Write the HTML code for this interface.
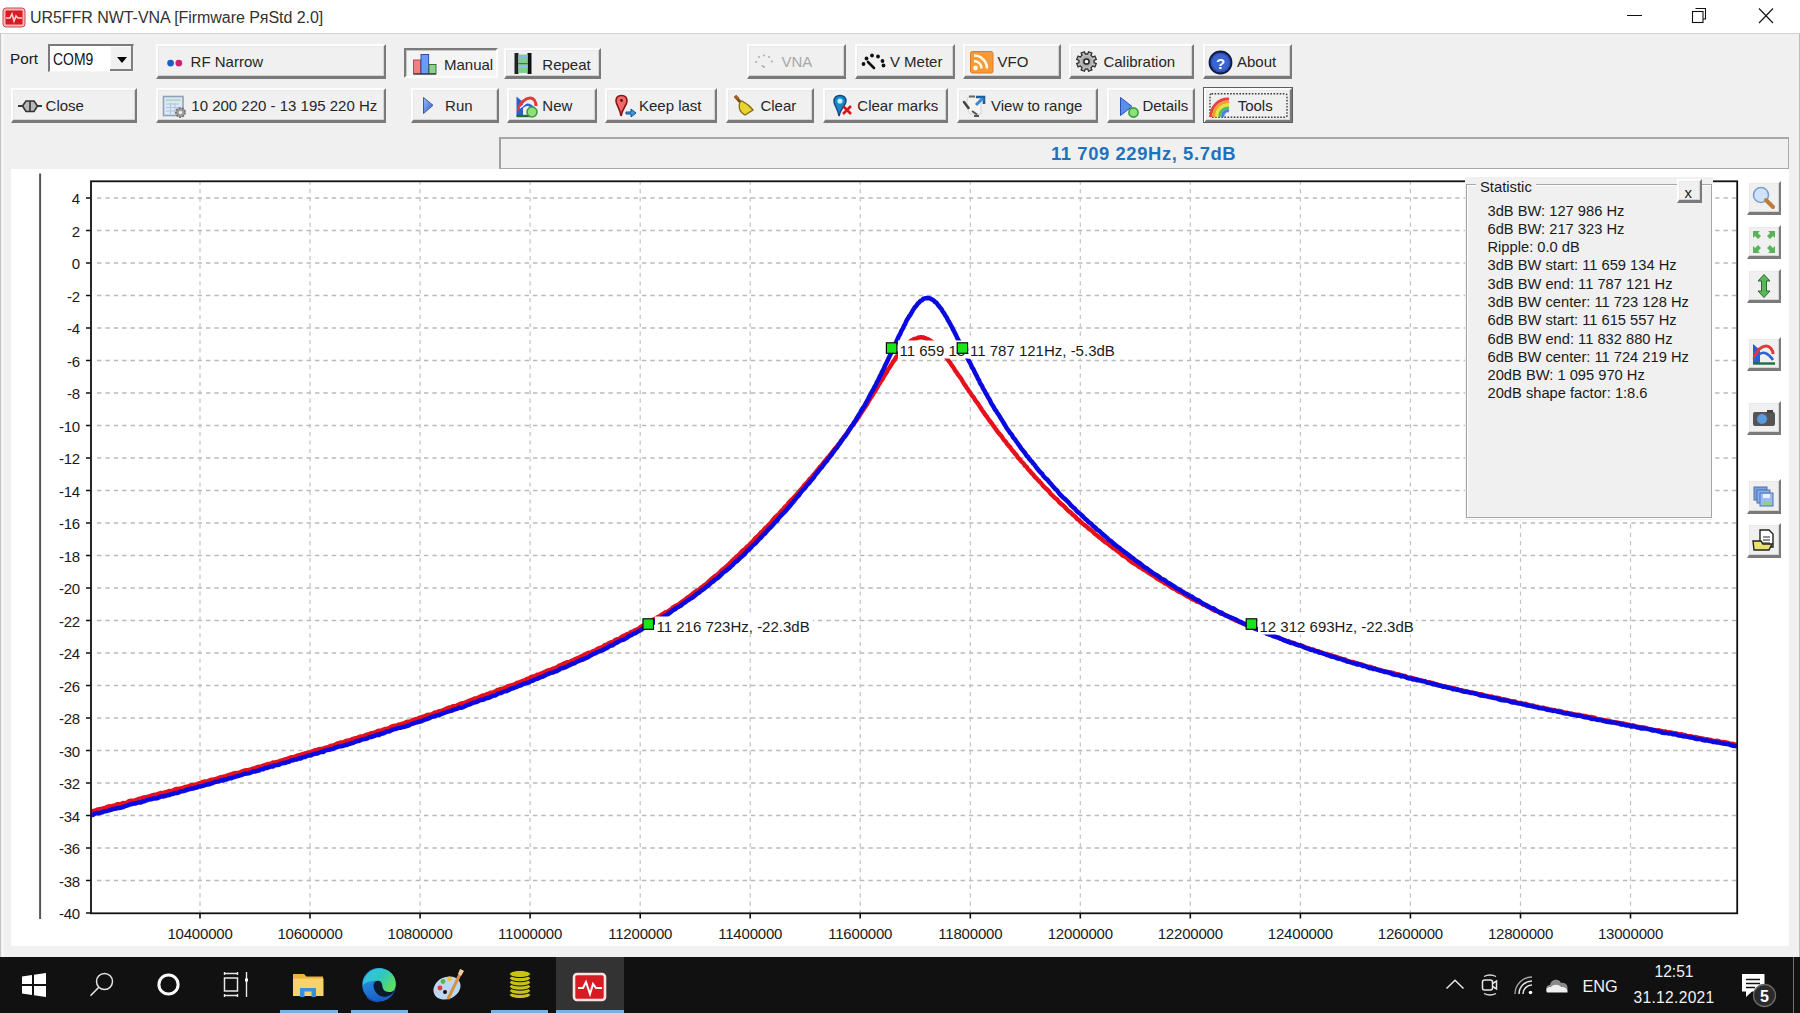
<!DOCTYPE html><html><head><meta charset="utf-8"><style>
*{margin:0;padding:0;box-sizing:border-box}
html,body{width:1800px;height:1013px;overflow:hidden;background:#f0f0f0;font-family:"Liberation Sans",sans-serif;color:#1e1e1e}
.a{position:absolute}
.t{position:absolute;white-space:nowrap;line-height:1}
.btn{position:absolute;background:#f0f0f0;border-top:2px solid #fdfdfd;border-left:2px solid #fdfdfd;border-right:2px solid #7a7a7a;border-bottom:3px solid #7a7a7a;box-shadow:inset -1px -1px 0 #d4d4d4, inset 1px 1px 0 #e9e9e9}
.btn.pr{border-top:2px solid #7a7a7a;border-left:2px solid #7a7a7a;border-right:2px solid #fdfdfd;border-bottom:2px solid #fdfdfd;box-shadow:inset 1px 1px 0 #c8c8c8;background:#f4f4f4}
.bt{position:absolute;white-space:nowrap;line-height:1;font-size:15px;color:#1a1a1a}
svg.ic{position:absolute;overflow:visible}
</style></head><body><div class="a" style="left:0;top:0;width:1800px;height:34px;background:#fff;border-bottom:1px solid #d2d2d2"></div>
<div class="a" style="left:0;top:34px;width:1px;height:923px;background:#c4c4c4"></div><div class="a" style="left:2px;top:34px;width:2px;height:923px;background:#f7f7f7"></div>
<div class="a" style="left:1799px;top:34px;width:1px;height:923px;background:#bdbdbd"></div>
<svg class="ic" style="left:2px;top:7px" width="24" height="21" viewBox="0 0 24 21"><rect x="1" y="1" width="22" height="19" rx="3" fill="#f4b7b7" stroke="#c94a4a" stroke-width="1"/><rect x="3.5" y="3.5" width="17" height="14" rx="1" fill="#d81b22"/><polyline points="4,11 8,11 10,7 12,14 14,9 16,11 20,11" fill="none" stroke="#ffd0d0" stroke-width="1.6"/></svg>
<div class="t" style="left:30px;top:10px;font-size:16px;color:#333;letter-spacing:-0.05px">UR5FFR NWT-VNA [Firmware PяStd 2.0]</div>
<div class="a" style="left:1627px;top:15px;width:15px;height:1px;background:#111"></div>
<svg class="ic" style="left:1690px;top:6px" width="20" height="20" viewBox="0 0 20 20"><path d="M5.5 2.5 H15.5 V13 H13" fill="none" stroke="#111" stroke-width="1.1"/><rect x="2.5" y="5.5" width="10.5" height="11" fill="none" stroke="#111" stroke-width="1.1"/></svg>
<svg class="ic" style="left:1756px;top:6px" width="20" height="20" viewBox="0 0 20 20"><path d="M3 2.5 L17 17 M17 2.5 L3 17" fill="none" stroke="#111" stroke-width="1.1"/></svg>
<div class="t" style="left:10px;top:51px;font-size:15.3px;color:#1a1a1a">Port</div>
<div class="a" style="left:48px;top:44px;width:86px;height:28px;background:#fff;border-top:2.2px solid #7a7a7a;border-left:2.2px solid #7a7a7a;border-right:1px solid #f4f4f4;border-bottom:1px solid #f4f4f4"></div>
<div class="a" style="left:110px;top:46px;width:23px;height:25px;background:#f0f0f0;border-right:2px solid #7f7f7f;border-bottom:2px solid #7f7f7f;box-shadow:inset 1px 1px 0 #fafafa"></div>
<svg class="ic" style="left:115.5px;top:56px" width="12" height="8" viewBox="0 0 12 8"><path d="M1 1 H11 L6 7 Z" fill="#000"/></svg>
<div class="t" style="left:53px;top:51.5px;font-size:16px;color:#111;transform:scaleX(0.87);transform-origin:0 0">COM9</div>
<div class="btn " style="left:156px;top:44px;width:230px;height:35px"></div>
<div class="bt" style="left:190.6px;top:54.1px;color:#262626;font-size:15.0px">RF Narrow</div>
<div class="btn pr" style="left:404px;top:48px;width:94px;height:30px"></div>
<div class="bt" style="left:444.0px;top:57.1px;color:#262626;font-size:15.0px">Manual</div>
<div class="btn " style="left:504px;top:48px;width:97px;height:31px"></div>
<div class="bt" style="left:542.3px;top:57.1px;color:#262626;font-size:15.0px">Repeat</div>
<div class="btn " style="left:747px;top:44px;width:99px;height:35px"></div>
<div class="bt" style="left:781.4px;top:54.1px;color:#a8a8a8;font-size:15.0px">VNA</div>
<div class="btn " style="left:855px;top:44px;width:100px;height:35px"></div>
<div class="bt" style="left:889.9px;top:54.1px;color:#262626;font-size:15.0px">V Meter</div>
<div class="btn " style="left:963px;top:44px;width:98px;height:35px"></div>
<div class="bt" style="left:997.5px;top:54.1px;color:#262626;font-size:15.0px">VFO</div>
<div class="btn " style="left:1069px;top:44px;width:125px;height:35px"></div>
<div class="bt" style="left:1103.4px;top:54.1px;color:#262626;font-size:15.0px">Calibration</div>
<div class="btn " style="left:1203px;top:44px;width:89px;height:35px"></div>
<div class="bt" style="left:1237.0px;top:54.1px;color:#262626;font-size:15.0px">About</div>
<div class="btn " style="left:11px;top:88px;width:126px;height:35px"></div>
<div class="bt" style="left:45.6px;top:97.8px;color:#262626;font-size:15.0px">Close</div>
<div class="btn " style="left:156px;top:88px;width:230px;height:35px"></div>
<div class="bt" style="left:191.3px;top:97.5px;color:#262626;font-size:15.0px">10 200 220 - 13 195 220 Hz</div>
<div class="btn " style="left:411px;top:88px;width:88px;height:35px"></div>
<div class="bt" style="left:445.1px;top:97.8px;color:#262626;font-size:15.0px">Run</div>
<div class="btn " style="left:507px;top:88px;width:90px;height:35px"></div>
<div class="bt" style="left:542.3px;top:97.8px;color:#262626;font-size:15.0px">New</div>
<div class="btn " style="left:605px;top:88px;width:112px;height:35px"></div>
<div class="bt" style="left:639.0px;top:97.5px;color:#262626;font-size:15.0px">Keep last</div>
<div class="btn " style="left:726px;top:88px;width:88px;height:35px"></div>
<div class="bt" style="left:760.4px;top:97.5px;color:#262626;font-size:15.0px">Clear</div>
<div class="btn " style="left:823px;top:88px;width:125px;height:35px"></div>
<div class="bt" style="left:857.3px;top:97.5px;color:#262626;font-size:15.0px">Clear marks</div>
<div class="btn " style="left:957px;top:88px;width:141px;height:35px"></div>
<div class="bt" style="left:991.0px;top:97.5px;color:#262626;font-size:15.0px">View to range</div>
<div class="btn " style="left:1107px;top:88px;width:88px;height:35px"></div>
<div class="bt" style="left:1142.4px;top:97.5px;color:#262626;font-size:15.0px">Details</div>
<div class="btn " style="left:1204px;top:88px;width:88px;height:35px"></div>
<div class="bt" style="left:1237.7px;top:97.5px;color:#262626;font-size:15.0px">Tools</div>
<div class="a" style="left:1203px;top:87px;width:90px;height:36px;border:1.5px solid #5e5e5e"></div>
<svg class="ic" style="left:1208px;top:92px" width="81" height="27" viewBox="0 0 81 27"><rect x="2" y="1.8" width="77" height="23.4" rx="1.5" fill="none" stroke="#3a3a3a" stroke-width="1.4" stroke-dasharray="1.6 1.5"/></svg>
<div class="a" style="left:499px;top:137px;width:1290px;height:32px;border:1px solid #a8a8a8;border-left:2px solid #a0a0a0;border-top:2px solid #a8a8a8"></div>
<div class="t" style="left:1051px;top:144.5px;font-size:18.4px;font-weight:bold;color:#1d72c0;letter-spacing:0.6px">11 709 229Hz, 5.7dB</div>
<div class="a" style="left:11px;top:169px;width:1778px;height:777px;background:#fff"></div>
<svg class="ic" style="left:0;top:0" width="1800" height="1013" viewBox="0 0 1800 1013"><path d="M93.0 198.0H1736.2M93.0 230.5H1736.2M93.0 263.0H1736.2M93.0 295.5H1736.2M93.0 328.0H1736.2M93.0 360.5H1736.2M93.0 393.0H1736.2M93.0 425.5H1736.2M93.0 458.0H1736.2M93.0 490.5H1736.2M93.0 523.0H1736.2M93.0 555.5H1736.2M93.0 588.0H1736.2M93.0 620.5H1736.2M93.0 653.0H1736.2M93.0 685.5H1736.2M93.0 718.0H1736.2M93.0 750.5H1736.2M93.0 783.0H1736.2M93.0 815.5H1736.2M93.0 848.0H1736.2M93.0 880.5H1736.2" stroke="#bababa" stroke-width="1.3" stroke-dasharray="4.4 3.984" stroke-dashoffset="-4" fill="none"/><path d="M200.0 182.3V912.3M310.0 182.3V912.3M420.1 182.3V912.3M530.1 182.3V912.3M640.2 182.3V912.3M750.2 182.3V912.3M860.2 182.3V912.3M970.3 182.3V912.3M1080.3 182.3V912.3M1190.3 182.3V912.3M1300.4 182.3V912.3M1410.4 182.3V912.3M1520.5 182.3V912.3M1630.5 182.3V912.3" stroke="#c2c2c2" stroke-width="1.2" stroke-dasharray="4.2 4.184" stroke-dashoffset="1.7" fill="none"/><path d="M86 198.0H91M86 230.5H91M86 263.0H91M86 295.5H91M86 328.0H91M86 360.5H91M86 393.0H91M86 425.5H91M86 458.0H91M86 490.5H91M86 523.0H91M86 555.5H91M86 588.0H91M86 620.5H91M86 653.0H91M86 685.5H91M86 718.0H91M86 750.5H91M86 783.0H91M86 815.5H91M86 848.0H91M86 880.5H91M86 913.0H91M200.0 913V918.5M310.0 913V918.5M420.1 913V918.5M530.1 913V918.5M640.2 913V918.5M750.2 913V918.5M860.2 913V918.5M970.3 913V918.5M1080.3 913V918.5M1190.3 913V918.5M1300.4 913V918.5M1410.4 913V918.5M1520.5 913V918.5M1630.5 913V918.5" stroke="#111" stroke-width="1.6" fill="none"/><path d="M40.1 173.6V919" stroke="#575757" stroke-width="2"/><clipPath id="pc"><rect x="91" y="181" width="1646.2" height="732.3"/></clipPath><g clip-path="url(#pc)"><path d="M91.0 811.0L93.0 811.1L95.0 810.6L97.0 809.6L99.0 809.3L101.0 808.8L103.0 808.4L105.0 808.0L107.0 806.9L109.0 806.3L111.0 806.6L113.0 805.7L115.0 805.5L117.0 804.3L119.0 804.2L121.0 803.9L123.0 802.9L125.0 803.1L127.0 802.5L129.0 801.2L131.0 800.7L133.0 800.7L135.0 800.5L137.0 799.5L139.0 798.8L141.0 798.5L143.0 797.6L145.0 797.3L147.0 796.9L149.0 796.5L151.0 795.7L153.0 795.2L155.0 794.7L157.0 794.4L159.0 793.7L161.0 792.9L163.0 793.1L165.0 792.3L167.0 791.9L169.0 791.0L171.0 791.2L173.0 790.5L175.0 789.3L177.0 789.0L179.0 788.8L181.0 788.3L183.0 787.9L185.0 786.9L187.0 786.8L189.0 786.1L191.0 785.2L193.0 784.9L195.0 784.7L197.0 784.1L199.0 783.3L201.0 782.8L203.0 781.8L205.0 781.4L207.0 781.4L209.0 780.5L211.0 779.7L213.0 779.5L215.0 779.1L217.0 778.5L219.0 777.7L221.0 777.2L223.0 776.8L225.0 776.5L227.0 775.7L229.0 775.0L231.0 774.5L233.0 773.6L235.0 773.0L237.0 773.1L239.0 772.8L241.0 771.9L243.0 771.1L245.0 770.4L247.0 770.1L249.0 770.0L251.0 769.3L253.0 768.5L255.0 768.2L257.0 767.1L259.0 766.8L261.0 766.6L263.0 765.7L265.0 765.0L267.0 764.3L269.0 764.0L271.0 763.8L273.0 762.4L275.0 762.5L277.0 762.0L279.0 761.4L281.0 760.7L283.0 760.2L285.0 759.4L287.0 758.9L289.0 758.2L291.0 757.3L293.0 757.4L295.0 756.6L297.0 755.6L299.0 755.3L301.0 754.7L303.0 754.0L305.0 753.4L307.0 753.0L309.0 752.5L311.0 751.9L313.0 751.2L315.0 750.2L317.0 749.8L319.0 749.2L321.0 748.9L323.0 748.6L325.0 747.9L327.0 747.3L329.0 746.8L331.0 745.7L333.0 745.6L335.0 744.8L337.0 743.7L339.0 743.0L341.0 742.4L343.0 742.5L345.0 741.4L347.0 740.7L349.0 740.5L351.0 739.7L353.0 738.8L355.0 738.3L357.0 738.0L359.0 737.0L361.0 736.5L363.0 736.3L365.0 735.4L367.0 734.7L369.0 734.2L371.0 733.2L373.0 732.9L375.0 732.3L377.0 731.4L379.0 730.7L381.0 730.8L383.0 729.8L385.0 728.9L387.0 728.6L389.0 728.2L391.0 726.8L393.0 726.2L395.0 725.6L397.0 725.5L399.0 724.4L401.0 724.2L403.0 723.5L405.0 722.8L407.0 721.8L409.0 721.8L411.0 721.0L413.0 720.1L415.0 719.2L417.0 718.9L419.0 718.0L421.0 717.5L423.0 716.6L425.0 716.2L427.0 715.0L429.0 714.6L431.0 714.5L433.0 713.7L435.0 712.5L437.0 712.3L439.0 711.2L441.0 711.0L443.0 710.2L445.0 709.2L447.0 708.4L449.0 707.4L451.0 707.5L453.0 706.1L455.0 706.1L457.0 705.5L459.0 704.4L461.0 703.4L463.0 703.3L465.0 702.7L467.0 701.7L469.0 700.8L471.0 700.0L473.0 699.2L475.0 698.4L477.0 698.1L479.0 697.2L481.0 696.2L483.0 695.4L485.0 695.2L487.0 694.1L489.0 693.5L491.0 692.6L493.0 692.4L495.0 691.7L497.0 690.1L499.0 689.5L501.0 688.9L503.0 688.7L505.0 687.8L507.0 686.6L509.0 685.8L511.0 685.4L513.0 684.8L515.0 684.1L517.0 682.8L519.0 682.5L521.0 681.6L523.0 680.6L525.0 680.3L527.0 678.8L529.0 678.4L531.0 677.1L533.0 676.4L535.0 676.2L537.0 674.8L539.0 674.5L541.0 673.5L543.0 672.9L545.0 671.7L547.0 670.8L549.0 670.0L551.0 669.7L553.0 668.6L555.0 668.1L557.0 667.2L559.0 665.7L561.0 665.2L563.0 664.0L565.0 663.0L567.0 662.2L569.0 662.1L571.0 661.1L573.0 660.3L575.0 659.0L577.0 658.4L579.0 657.6L581.0 656.4L583.0 655.7L585.0 654.4L587.0 653.4L589.0 652.7L591.0 652.3L593.0 651.1L595.0 650.5L597.0 649.2L599.0 648.1L601.0 647.6L603.0 646.7L605.0 645.0L607.0 644.6L609.0 643.1L611.0 642.1L613.0 641.9L615.0 640.1L617.0 639.3L619.0 639.0L621.0 637.4L623.0 636.1L625.0 635.2L627.0 634.2L629.0 633.6L631.0 632.0L633.0 631.6L635.0 630.1L637.0 629.5L639.0 628.4L641.0 626.7L643.0 625.6L645.0 624.7L647.0 623.2L649.0 622.5L651.0 620.8L653.0 619.6L655.0 619.3L657.0 617.5L659.0 616.6L661.0 615.2L663.0 613.9L665.0 612.4L667.0 611.9L669.0 610.7L671.0 609.4L673.0 607.3L675.0 606.1L677.0 605.2L679.0 604.1L681.0 602.4L683.0 601.1L685.0 599.7L687.0 597.9L689.0 596.7L691.0 595.1L693.0 593.5L695.0 591.9L697.0 590.6L699.0 589.7L701.0 587.6L703.0 586.3L705.0 584.7L707.0 583.3L709.0 581.2L711.0 579.5L713.0 577.8L715.0 576.1L717.0 574.9L719.0 573.2L721.0 571.0L723.0 569.3L725.0 567.7L727.0 565.9L729.0 564.1L731.0 562.0L733.0 559.9L735.0 558.2L737.0 556.2L739.0 554.7L741.0 552.4L743.0 550.4L745.0 549.0L747.0 546.7L749.0 545.2L751.0 542.9L753.0 541.2L755.0 538.5L757.0 536.8L759.0 535.0L761.0 532.3L763.0 531.0L765.0 528.2L767.0 526.6L769.0 524.7L771.0 522.4L773.0 519.8L775.0 517.5L777.0 515.7L779.0 513.9L781.0 511.2L783.0 509.5L785.0 506.7L787.0 505.2L789.0 502.2L791.0 500.2L793.0 498.5L795.0 496.2L797.0 494.1L799.0 491.8L801.0 489.4L803.0 487.1L804.0 485.5L805.0 484.6L806.0 483.2L807.0 482.5L808.0 481.4L809.0 479.8L810.0 478.5L811.0 478.2L812.0 476.8L813.0 475.5L814.0 474.3L815.0 473.4L816.0 471.8L817.0 470.6L818.0 469.4L819.0 468.1L820.0 466.7L821.0 466.1L822.0 464.7L823.0 463.6L824.0 462.0L825.0 461.0L826.0 459.6L827.0 458.4L828.0 457.3L829.0 456.6L830.0 454.9L831.0 453.7L832.0 452.6L833.0 451.1L834.0 449.6L835.0 448.8L836.0 447.5L837.0 446.4L838.0 444.9L839.0 443.8L840.0 442.6L841.0 440.8L842.0 439.8L843.0 438.4L844.0 436.9L845.0 435.7L846.0 434.5L847.0 433.5L848.0 432.2L849.0 430.2L850.0 429.2L851.0 427.3L852.0 425.9L853.0 424.9L854.0 423.8L855.0 421.7L856.0 420.8L857.0 419.5L858.0 417.5L859.0 416.4L860.0 415.0L861.0 413.1L862.0 411.9L863.0 410.4L864.0 408.7L865.0 407.4L866.0 405.9L867.0 404.4L868.0 402.5L869.0 400.5L870.0 399.0L871.0 397.4L872.0 396.1L873.0 394.6L874.0 392.4L875.0 391.3L876.0 389.7L877.0 387.7L878.0 386.2L879.0 384.2L880.0 383.1L881.0 380.8L882.0 380.0L883.0 378.2L884.0 376.3L885.0 374.4L886.0 373.3L887.0 371.7L888.0 369.4L889.0 368.3L890.0 366.8L891.0 365.1L892.0 363.6L893.0 361.8L894.0 360.7L895.0 359.3L896.0 357.4L897.0 356.4L898.0 354.7L899.0 353.1L900.0 352.0L901.0 350.5L902.0 350.1L903.0 349.0L904.0 347.1L905.0 346.5L906.0 345.3L907.0 344.1L908.0 343.4L909.0 342.5L910.0 342.2L911.0 340.8L912.0 340.3L913.0 339.9L914.0 339.0L915.0 339.0L916.0 338.6L917.0 338.4L918.0 337.6L919.0 337.4L920.0 337.5L921.0 337.2L922.0 337.5L923.0 337.3L924.0 337.8L925.0 338.1L926.0 338.5L927.0 339.0L928.0 339.1L929.0 339.6L930.0 340.5L931.0 341.1L932.0 341.7L933.0 342.3L934.0 343.1L935.0 343.8L936.0 345.4L937.0 345.8L938.0 347.5L939.0 348.4L940.0 349.9L941.0 351.0L942.0 352.4L943.0 352.9L944.0 354.5L945.0 355.9L946.0 357.0L947.0 358.5L948.0 359.8L949.0 361.4L950.0 362.3L951.0 364.1L952.0 365.6L953.0 366.9L954.0 368.4L955.0 370.3L956.0 371.6L957.0 373.0L958.0 374.6L959.0 375.8L960.0 377.2L961.0 378.5L962.0 380.2L963.0 382.0L964.0 383.7L965.0 385.2L966.0 386.4L967.0 388.3L968.0 389.3L969.0 391.2L970.0 392.3L971.0 394.0L972.0 395.7L973.0 396.6L974.0 397.9L975.0 399.8L976.0 401.2L977.0 402.5L978.0 403.6L979.0 405.4L980.0 406.9L981.0 408.3L982.0 410.1L983.0 411.3L984.0 412.8L985.0 414.4L986.0 415.7L987.0 416.8L988.0 418.5L989.0 419.8L990.0 421.1L991.0 422.5L992.0 423.7L993.0 425.2L994.0 426.6L995.0 428.2L996.0 429.4L997.0 430.8L998.0 432.1L999.0 433.5L1000.0 434.6L1001.0 435.7L1002.0 436.9L1003.0 438.6L1004.0 440.1L1005.0 441.0L1006.0 442.0L1007.0 443.9L1008.0 444.8L1009.0 446.1L1010.0 447.0L1011.0 448.6L1012.0 450.1L1013.0 451.0L1014.0 452.2L1015.0 453.7L1016.0 454.4L1017.0 456.0L1018.0 457.6L1019.0 458.6L1020.0 459.5L1021.0 461.0L1022.0 462.1L1023.0 462.9L1024.0 464.1L1025.0 465.8L1026.0 466.4L1027.0 467.4L1028.0 469.2L1029.0 470.1L1030.0 471.1L1031.0 472.4L1032.0 473.7L1033.0 474.3L1034.0 475.8L1035.0 477.0L1036.0 478.2L1037.0 478.8L1038.0 480.2L1039.0 480.9L1040.0 482.3L1041.0 483.0L1043.0 485.7L1045.0 487.8L1047.0 489.4L1049.0 491.4L1051.0 494.1L1053.0 495.9L1055.0 498.0L1057.0 499.3L1059.0 502.0L1061.0 503.7L1063.0 505.3L1065.0 507.3L1067.0 509.5L1069.0 511.4L1071.0 512.7L1073.0 514.9L1075.0 516.3L1077.0 518.8L1079.0 520.1L1081.0 522.3L1083.0 523.9L1085.0 525.5L1087.0 526.9L1089.0 528.8L1091.0 530.1L1093.0 531.8L1095.0 534.0L1097.0 535.3L1099.0 537.3L1101.0 538.4L1103.0 540.4L1105.0 542.0L1107.0 543.2L1109.0 544.6L1111.0 546.4L1113.0 548.0L1115.0 549.1L1117.0 550.7L1119.0 552.1L1121.0 554.0L1123.0 555.7L1125.0 556.6L1127.0 557.8L1129.0 559.9L1131.0 561.4L1133.0 562.9L1135.0 564.0L1137.0 565.1L1139.0 566.9L1141.0 567.6L1143.0 569.5L1145.0 570.3L1147.0 571.8L1149.0 573.2L1151.0 574.4L1153.0 575.5L1155.0 576.8L1157.0 578.6L1159.0 579.6L1161.0 580.9L1163.0 581.8L1165.0 583.5L1167.0 584.3L1169.0 585.7L1171.0 587.2L1173.0 588.5L1175.0 588.8L1177.0 590.6L1179.0 591.8L1181.0 592.5L1183.0 593.6L1185.0 594.9L1187.0 596.3L1189.0 597.0L1191.0 598.5L1193.0 599.5L1195.0 600.0L1197.0 601.7L1199.0 602.0L1201.0 603.1L1203.0 604.6L1205.0 605.1L1207.0 606.4L1209.0 607.2L1211.0 608.5L1213.0 609.8L1215.0 610.9L1217.0 611.0L1219.0 612.0L1221.0 613.7L1223.0 613.9L1225.0 615.1L1227.0 615.9L1229.0 616.8L1231.0 617.6L1233.0 619.1L1235.0 620.1L1237.0 620.9L1239.0 621.9L1241.0 622.7L1243.0 623.3L1245.0 624.4L1247.0 625.5L1249.0 626.1L1251.0 626.6L1253.0 627.2L1255.0 628.9L1257.0 629.4L1259.0 630.0L1261.0 631.0L1263.0 631.8L1265.0 632.5L1267.0 632.9L1269.0 633.9L1271.0 634.8L1273.0 635.4L1275.0 636.7L1277.0 637.1L1279.0 638.0L1281.0 638.8L1283.0 639.6L1285.0 640.3L1287.0 641.1L1289.0 641.3L1291.0 642.7L1293.0 642.7L1295.0 644.1L1297.0 644.7L1299.0 645.4L1301.0 645.4L1303.0 646.1L1305.0 647.4L1307.0 647.8L1309.0 648.4L1311.0 649.6L1313.0 649.4L1315.0 650.5L1317.0 651.1L1319.0 651.4L1321.0 652.3L1323.0 653.2L1325.0 654.0L1327.0 653.9L1329.0 655.0L1331.0 655.2L1333.0 656.5L1335.0 656.4L1337.0 657.0L1339.0 657.9L1341.0 658.8L1343.0 659.1L1345.0 659.5L1347.0 660.7L1349.0 661.3L1351.0 661.9L1353.0 662.0L1355.0 662.7L1357.0 663.1L1359.0 664.0L1361.0 664.3L1363.0 664.9L1365.0 665.9L1367.0 666.6L1369.0 666.8L1371.0 667.0L1373.0 668.0L1375.0 668.4L1377.0 669.4L1379.0 669.7L1381.0 670.3L1383.0 670.8L1385.0 671.2L1387.0 672.0L1389.0 672.5L1391.0 672.5L1393.0 672.9L1395.0 673.7L1397.0 674.3L1399.0 674.5L1401.0 675.2L1403.0 675.9L1405.0 676.0L1407.0 677.2L1409.0 677.5L1411.0 677.7L1413.0 678.2L1415.0 678.8L1417.0 679.2L1419.0 680.1L1421.0 680.4L1423.0 680.9L1425.0 681.1L1427.0 682.3L1429.0 682.2L1431.0 682.7L1433.0 683.0L1435.0 684.3L1437.0 684.3L1439.0 685.2L1441.0 685.7L1443.0 686.2L1445.0 686.5L1447.0 687.1L1449.0 687.5L1451.0 687.9L1453.0 687.8L1455.0 688.6L1457.0 689.1L1459.0 689.9L1461.0 690.2L1463.0 690.6L1465.0 691.1L1467.0 691.2L1469.0 692.2L1471.0 692.4L1473.0 692.6L1475.0 693.1L1477.0 694.0L1479.0 694.1L1481.0 694.2L1483.0 694.6L1485.0 695.6L1487.0 695.9L1489.0 696.6L1491.0 696.4L1493.0 697.1L1495.0 697.8L1497.0 697.6L1499.0 698.1L1501.0 698.9L1503.0 699.1L1505.0 699.4L1507.0 700.0L1509.0 700.7L1511.0 701.1L1513.0 701.1L1515.0 701.5L1517.0 702.7L1519.0 702.9L1521.0 702.9L1523.0 703.9L1525.0 703.6L1527.0 704.3L1529.0 705.2L1531.0 705.5L1533.0 705.5L1535.0 706.5L1537.0 706.6L1539.0 707.3L1541.0 707.7L1543.0 707.7L1545.0 708.4L1547.0 708.6L1549.0 709.4L1551.0 709.7L1553.0 710.0L1555.0 710.5L1557.0 711.1L1559.0 710.8L1561.0 711.2L1563.0 712.1L1565.0 712.5L1567.0 712.7L1569.0 713.1L1571.0 713.4L1573.0 714.2L1575.0 714.5L1577.0 714.7L1579.0 714.7L1581.0 715.8L1583.0 715.8L1585.0 716.0L1587.0 716.5L1589.0 717.2L1591.0 717.0L1593.0 717.5L1595.0 718.0L1597.0 719.0L1599.0 719.2L1601.0 719.8L1603.0 719.8L1605.0 720.2L1607.0 720.6L1609.0 721.0L1611.0 721.4L1613.0 722.0L1615.0 722.5L1617.0 722.4L1619.0 723.0L1621.0 723.1L1623.0 723.5L1625.0 724.0L1627.0 724.5L1629.0 724.8L1631.0 725.6L1633.0 725.2L1635.0 726.0L1637.0 726.7L1639.0 726.9L1641.0 727.1L1643.0 727.3L1645.0 727.7L1647.0 728.6L1649.0 728.9L1651.0 729.1L1653.0 729.7L1655.0 730.1L1657.0 730.4L1659.0 730.3L1661.0 730.8L1663.0 731.4L1665.0 731.4L1667.0 732.1L1669.0 732.3L1671.0 732.5L1673.0 733.0L1675.0 733.1L1677.0 733.6L1679.0 734.1L1681.0 734.1L1683.0 734.6L1685.0 735.0L1687.0 735.9L1689.0 736.1L1691.0 736.1L1693.0 737.2L1695.0 736.9L1697.0 737.4L1699.0 738.0L1701.0 738.3L1703.0 738.5L1705.0 739.1L1707.0 739.2L1709.0 739.8L1711.0 740.0L1713.0 740.8L1715.0 740.9L1717.0 740.7L1719.0 741.1L1721.0 742.2L1723.0 741.9L1725.0 742.1L1727.0 742.6L1729.0 743.2L1731.0 744.0L1733.0 743.8L1735.0 744.5L1737.0 744.9" fill="none" stroke="#e8101a" stroke-width="4.4" stroke-linejoin="round"/><path d="M91.0 815.3L93.0 814.8L95.0 813.5L97.0 813.0L99.0 813.2L101.0 812.6L103.0 812.0L105.0 811.2L107.0 810.9L109.0 810.4L111.0 809.9L113.0 809.0L115.0 808.7L117.0 808.2L119.0 807.9L121.0 807.7L123.0 807.1L125.0 806.2L127.0 805.6L129.0 804.9L131.0 804.2L133.0 803.7L135.0 803.6L137.0 802.9L139.0 802.4L141.0 802.4L143.0 801.5L145.0 801.0L147.0 800.2L149.0 799.5L151.0 799.3L153.0 798.6L155.0 798.4L157.0 798.3L159.0 797.5L161.0 796.5L163.0 796.6L165.0 796.0L167.0 795.4L169.0 795.0L171.0 794.4L173.0 793.9L175.0 792.9L177.0 793.0L179.0 792.4L181.0 791.2L183.0 791.2L185.0 790.6L187.0 789.8L189.0 789.3L191.0 788.8L193.0 788.6L195.0 787.7L197.0 787.5L199.0 786.5L201.0 786.4L203.0 785.9L205.0 785.0L207.0 784.5L209.0 784.3L211.0 783.6L213.0 782.8L215.0 782.0L217.0 781.6L219.0 781.4L221.0 780.3L223.0 780.5L225.0 779.3L227.0 779.4L229.0 778.3L231.0 778.3L233.0 777.5L235.0 776.8L237.0 776.2L239.0 775.8L241.0 775.2L243.0 774.4L245.0 773.7L247.0 773.5L249.0 773.3L251.0 772.4L253.0 771.4L255.0 771.5L257.0 770.9L259.0 770.5L261.0 769.2L263.0 769.2L265.0 768.0L267.0 768.0L269.0 767.1L271.0 766.5L273.0 766.5L275.0 765.2L277.0 765.0L279.0 764.7L281.0 763.6L283.0 763.0L285.0 763.0L287.0 762.1L289.0 761.7L291.0 760.6L293.0 760.3L295.0 759.5L297.0 759.4L299.0 758.3L301.0 758.5L303.0 757.1L305.0 757.1L307.0 755.9L309.0 755.5L311.0 755.4L313.0 754.3L315.0 753.7L317.0 753.6L319.0 752.7L321.0 751.8L323.0 752.1L325.0 750.7L327.0 750.0L329.0 749.7L331.0 749.3L333.0 748.9L335.0 747.7L337.0 747.3L339.0 746.4L341.0 746.2L343.0 745.9L345.0 745.2L347.0 744.8L349.0 744.0L351.0 743.5L353.0 742.8L355.0 742.0L357.0 741.1L359.0 740.9L361.0 740.0L363.0 739.2L365.0 738.9L367.0 738.6L369.0 737.3L371.0 737.1L373.0 736.3L375.0 735.8L377.0 734.8L379.0 735.0L381.0 733.7L383.0 733.4L385.0 732.6L387.0 731.6L389.0 731.4L391.0 730.4L393.0 729.7L395.0 729.0L397.0 728.5L399.0 727.8L401.0 727.7L403.0 726.9L405.0 726.7L407.0 726.0L409.0 725.4L411.0 724.1L413.0 723.6L415.0 722.8L417.0 722.4L419.0 721.8L421.0 721.3L423.0 720.5L425.0 719.5L427.0 719.0L429.0 718.4L431.0 717.2L433.0 716.6L435.0 716.3L437.0 715.3L439.0 715.2L441.0 714.1L443.0 713.3L445.0 712.7L447.0 712.0L449.0 711.3L451.0 710.9L453.0 710.2L455.0 709.3L457.0 708.9L459.0 707.8L461.0 707.8L463.0 707.1L465.0 706.2L467.0 705.2L469.0 704.6L471.0 703.9L473.0 702.8L475.0 702.4L477.0 701.8L479.0 700.7L481.0 699.9L483.0 699.8L485.0 698.7L487.0 698.1L489.0 697.7L491.0 696.7L493.0 695.7L495.0 695.6L497.0 694.3L499.0 693.2L501.0 693.1L503.0 691.8L505.0 691.2L507.0 690.9L509.0 690.0L511.0 688.7L513.0 688.3L515.0 687.5L517.0 686.8L519.0 685.8L521.0 685.3L523.0 684.1L525.0 683.5L527.0 682.8L529.0 682.5L531.0 680.9L533.0 680.7L535.0 679.4L537.0 678.9L539.0 678.0L541.0 677.2L543.0 676.6L545.0 675.5L547.0 674.4L549.0 673.6L551.0 672.7L553.0 672.6L555.0 671.5L557.0 671.0L559.0 669.9L561.0 668.4L563.0 668.1L565.0 667.4L567.0 666.5L569.0 665.4L571.0 664.4L573.0 663.6L575.0 663.0L577.0 661.6L579.0 660.9L581.0 660.0L583.0 659.5L585.0 658.5L587.0 657.7L589.0 656.6L591.0 655.2L593.0 654.2L595.0 653.5L597.0 652.3L599.0 651.5L601.0 650.8L603.0 650.0L605.0 648.8L607.0 648.0L609.0 646.4L611.0 645.6L613.0 645.2L615.0 643.4L617.0 642.6L619.0 641.3L621.0 640.3L623.0 639.9L625.0 639.0L627.0 637.6L629.0 636.1L631.0 635.2L633.0 634.0L635.0 633.3L637.0 632.2L639.0 630.9L641.0 629.9L643.0 628.4L645.0 627.6L647.0 626.8L649.0 625.5L651.0 623.7L653.0 622.9L655.0 621.9L657.0 620.3L659.0 619.7L661.0 618.1L663.0 617.1L665.0 615.5L667.0 614.8L669.0 613.4L671.0 611.9L673.0 610.2L675.0 609.2L677.0 607.5L679.0 606.6L681.0 605.5L683.0 603.6L685.0 602.5L687.0 601.0L689.0 599.6L691.0 598.4L693.0 597.2L695.0 595.5L697.0 593.8L699.0 592.8L701.0 590.7L703.0 589.5L705.0 587.9L707.0 586.5L709.0 585.0L711.0 582.8L713.0 581.6L715.0 579.7L717.0 578.3L719.0 577.0L721.0 575.0L723.0 572.7L725.0 571.4L727.0 569.9L729.0 568.3L731.0 566.3L733.0 564.7L735.0 562.2L737.0 561.2L739.0 559.1L741.0 557.2L743.0 555.6L745.0 553.6L747.0 551.0L749.0 549.7L751.0 547.7L753.0 545.2L755.0 543.7L757.0 541.6L759.0 539.2L761.0 537.7L763.0 535.0L765.0 533.4L767.0 531.1L769.0 528.8L771.0 527.0L773.0 524.7L775.0 522.3L777.0 520.8L779.0 517.8L781.0 515.5L783.0 513.7L785.0 511.7L787.0 509.3L789.0 507.0L791.0 504.5L793.0 502.3L795.0 499.7L797.0 497.2L799.0 495.1L801.0 492.3L803.0 489.9L805.0 488.1L807.0 485.1L809.0 483.2L810.0 482.0L811.0 480.5L812.0 479.5L813.0 478.3L814.0 477.2L815.0 475.3L816.0 474.1L817.0 473.0L818.0 471.8L819.0 470.4L820.0 468.9L821.0 468.1L822.0 467.2L823.0 465.4L824.0 464.3L825.0 462.9L826.0 461.7L827.0 460.8L828.0 459.0L829.0 458.0L830.0 456.5L831.0 455.3L832.0 454.3L833.0 452.2L834.0 451.5L835.0 449.7L836.0 448.7L837.0 447.5L838.0 446.0L839.0 444.4L840.0 443.4L841.0 441.4L842.0 440.4L843.0 438.8L844.0 437.5L845.0 436.4L846.0 434.9L847.0 433.3L848.0 431.6L849.0 430.0L850.0 428.7L851.0 427.0L852.0 425.6L853.0 424.6L854.0 422.3L855.0 421.4L856.0 419.4L857.0 417.8L858.0 416.2L859.0 414.3L860.0 413.0L861.0 411.1L862.0 409.6L863.0 407.8L864.0 406.6L865.0 404.9L866.0 402.7L867.0 401.1L868.0 399.6L869.0 397.2L870.0 395.2L871.0 393.4L872.0 391.5L873.0 390.1L874.0 387.9L875.0 385.9L876.0 384.4L877.0 381.9L878.0 380.4L879.0 378.3L880.0 376.0L881.0 374.4L882.0 371.9L883.0 370.3L884.0 368.2L885.0 365.7L886.0 363.8L887.0 361.9L888.0 359.6L889.0 357.5L890.0 355.4L891.0 353.3L892.0 351.0L893.0 349.1L894.0 346.4L895.0 344.6L896.0 342.5L897.0 340.1L898.0 338.0L899.0 335.8L900.0 334.4L901.0 331.8L902.0 329.9L903.0 328.3L904.0 325.7L905.0 324.4L906.0 321.8L907.0 319.8L908.0 318.3L909.0 316.5L910.0 315.3L911.0 313.6L912.0 311.9L913.0 310.0L914.0 308.7L915.0 307.0L916.0 306.2L917.0 304.6L918.0 303.3L919.0 302.6L920.0 301.3L921.0 300.6L922.0 300.4L923.0 299.1L924.0 298.6L925.0 298.3L926.0 298.1L927.0 298.2L928.0 298.0L929.0 298.3L930.0 298.4L931.0 298.8L932.0 299.7L933.0 300.0L934.0 300.8L935.0 302.0L936.0 302.3L937.0 303.4L938.0 305.2L939.0 306.0L940.0 307.6L941.0 308.4L942.0 310.2L943.0 312.0L944.0 313.1L945.0 315.1L946.0 316.6L947.0 318.1L948.0 320.4L949.0 321.7L950.0 323.6L951.0 325.6L952.0 327.2L953.0 329.5L954.0 331.2L955.0 333.2L956.0 335.1L957.0 337.5L958.0 339.4L959.0 341.3L960.0 342.9L961.0 344.9L962.0 347.0L963.0 348.6L964.0 350.7L965.0 353.5L966.0 354.7L967.0 357.4L968.0 359.2L969.0 361.4L970.0 362.7L971.0 364.9L972.0 367.3L973.0 368.6L974.0 370.6L975.0 372.8L976.0 374.6L977.0 376.5L978.0 378.9L979.0 380.3L980.0 383.0L981.0 384.6L982.0 385.9L983.0 388.5L984.0 389.8L985.0 391.8L986.0 393.7L987.0 395.1L988.0 397.2L989.0 398.6L990.0 400.5L991.0 402.8L992.0 404.5L993.0 405.9L994.0 407.7L995.0 409.6L996.0 410.6L997.0 412.5L998.0 413.8L999.0 415.4L1000.0 417.0L1001.0 418.7L1002.0 420.1L1003.0 421.8L1004.0 423.5L1005.0 425.2L1006.0 427.0L1007.0 428.5L1008.0 429.8L1009.0 431.1L1010.0 432.9L1011.0 433.7L1012.0 435.1L1013.0 437.2L1014.0 438.4L1015.0 439.4L1016.0 441.0L1017.0 442.3L1018.0 443.8L1019.0 445.1L1020.0 446.5L1021.0 448.2L1022.0 449.5L1023.0 450.6L1024.0 451.8L1025.0 453.0L1026.0 454.7L1027.0 456.2L1028.0 456.8L1029.0 458.5L1030.0 459.7L1031.0 461.0L1032.0 461.6L1033.0 463.3L1034.0 464.2L1035.0 465.5L1036.0 467.0L1037.0 468.3L1038.0 469.5L1039.0 470.7L1040.0 471.9L1041.0 472.9L1042.0 473.6L1043.0 475.4L1044.0 476.6L1045.0 477.8L1046.0 478.7L1047.0 479.3L1049.0 481.7L1051.0 483.9L1053.0 486.5L1055.0 488.6L1057.0 490.4L1059.0 493.2L1061.0 495.4L1063.0 497.4L1065.0 499.0L1067.0 500.9L1069.0 502.8L1071.0 505.4L1073.0 507.2L1075.0 508.8L1077.0 511.3L1079.0 512.9L1081.0 514.6L1083.0 516.5L1085.0 518.7L1087.0 520.3L1089.0 522.3L1091.0 523.6L1093.0 525.9L1095.0 527.3L1097.0 529.6L1099.0 530.7L1101.0 532.6L1103.0 534.5L1105.0 536.1L1107.0 537.9L1109.0 539.9L1111.0 540.9L1113.0 543.1L1115.0 544.6L1117.0 546.3L1119.0 547.6L1121.0 549.2L1123.0 550.7L1125.0 552.4L1127.0 553.7L1129.0 555.2L1131.0 557.0L1133.0 558.2L1135.0 559.9L1137.0 561.5L1139.0 562.7L1141.0 564.1L1143.0 565.9L1145.0 567.5L1147.0 568.4L1149.0 570.1L1151.0 571.6L1153.0 573.1L1155.0 574.3L1157.0 575.3L1159.0 576.6L1161.0 578.5L1163.0 579.3L1165.0 580.3L1167.0 582.4L1169.0 583.1L1171.0 584.4L1173.0 585.7L1175.0 586.9L1177.0 588.5L1179.0 589.4L1181.0 590.7L1183.0 591.9L1185.0 593.4L1187.0 593.9L1189.0 595.5L1191.0 596.3L1193.0 597.5L1195.0 599.0L1197.0 599.9L1199.0 600.7L1201.0 602.3L1203.0 603.7L1205.0 604.5L1207.0 605.5L1209.0 606.8L1211.0 608.0L1213.0 608.3L1215.0 609.5L1217.0 611.1L1219.0 612.1L1221.0 612.4L1223.0 613.9L1225.0 615.0L1227.0 615.8L1229.0 616.8L1231.0 617.6L1233.0 618.3L1235.0 619.2L1237.0 620.0L1239.0 621.5L1241.0 621.9L1243.0 623.3L1245.0 624.0L1247.0 624.9L1249.0 626.3L1251.0 626.6L1253.0 627.6L1255.0 628.3L1257.0 629.1L1259.0 629.9L1261.0 631.0L1263.0 632.1L1265.0 632.3L1267.0 633.9L1269.0 634.4L1271.0 634.7L1273.0 636.0L1275.0 636.5L1277.0 637.4L1279.0 637.8L1281.0 639.0L1283.0 639.7L1285.0 640.7L1287.0 641.3L1289.0 642.1L1291.0 642.9L1293.0 643.1L1295.0 643.7L1297.0 644.8L1299.0 645.2L1301.0 645.9L1303.0 646.8L1305.0 647.7L1307.0 648.4L1309.0 649.1L1311.0 650.1L1313.0 650.0L1315.0 651.1L1317.0 651.3L1319.0 652.5L1321.0 652.9L1323.0 653.3L1325.0 654.1L1327.0 655.1L1329.0 655.5L1331.0 656.6L1333.0 656.7L1335.0 657.3L1337.0 658.4L1339.0 658.8L1341.0 658.9L1343.0 660.1L1345.0 660.4L1347.0 661.5L1349.0 661.8L1351.0 662.5L1353.0 663.2L1355.0 663.4L1357.0 664.4L1359.0 664.2L1361.0 665.0L1363.0 666.0L1365.0 665.9L1367.0 667.0L1369.0 667.9L1371.0 668.2L1373.0 668.9L1375.0 668.7L1377.0 669.7L1379.0 670.3L1381.0 670.7L1383.0 671.2L1385.0 672.1L1387.0 672.0L1389.0 672.5L1391.0 673.5L1393.0 674.4L1395.0 674.8L1397.0 675.1L1399.0 675.3L1401.0 676.4L1403.0 676.1L1405.0 676.8L1407.0 677.8L1409.0 678.4L1411.0 678.5L1413.0 679.5L1415.0 679.2L1417.0 680.2L1419.0 680.2L1421.0 680.8L1423.0 681.3L1425.0 681.6L1427.0 682.5L1429.0 683.1L1431.0 683.3L1433.0 684.2L1435.0 684.1L1437.0 685.0L1439.0 685.5L1441.0 685.9L1443.0 686.8L1445.0 686.6L1447.0 687.3L1449.0 687.8L1451.0 688.2L1453.0 689.2L1455.0 689.3L1457.0 689.7L1459.0 690.1L1461.0 690.6L1463.0 691.5L1465.0 691.8L1467.0 692.1L1469.0 692.2L1471.0 693.0L1473.0 693.0L1475.0 693.7L1477.0 693.8L1479.0 694.9L1481.0 695.6L1483.0 695.7L1485.0 696.1L1487.0 696.3L1489.0 696.9L1491.0 697.4L1493.0 697.8L1495.0 698.1L1497.0 698.5L1499.0 699.4L1501.0 700.0L1503.0 700.3L1505.0 700.6L1507.0 700.5L1509.0 701.1L1511.0 702.0L1513.0 702.6L1515.0 702.6L1517.0 703.1L1519.0 703.6L1521.0 703.7L1523.0 704.5L1525.0 704.6L1527.0 705.5L1529.0 705.5L1531.0 706.1L1533.0 706.5L1535.0 706.9L1537.0 707.2L1539.0 708.1L1541.0 708.3L1543.0 708.4L1545.0 708.9L1547.0 709.7L1549.0 710.0L1551.0 710.3L1553.0 711.0L1555.0 710.6L1557.0 711.5L1559.0 711.9L1561.0 712.2L1563.0 713.0L1565.0 713.4L1567.0 713.3L1569.0 713.9L1571.0 714.5L1573.0 714.8L1575.0 714.9L1577.0 715.7L1579.0 715.7L1581.0 715.9L1583.0 716.8L1585.0 717.2L1587.0 717.4L1589.0 717.8L1591.0 718.7L1593.0 718.9L1595.0 719.0L1597.0 719.8L1599.0 719.9L1601.0 720.1L1603.0 720.8L1605.0 721.3L1607.0 721.8L1609.0 722.0L1611.0 722.4L1613.0 722.5L1615.0 722.6L1617.0 723.3L1619.0 723.4L1621.0 724.6L1623.0 724.4L1625.0 725.0L1627.0 725.5L1629.0 725.4L1631.0 726.4L1633.0 726.3L1635.0 726.5L1637.0 727.4L1639.0 727.6L1641.0 728.4L1643.0 728.4L1645.0 728.4L1647.0 728.8L1649.0 729.2L1651.0 730.0L1653.0 730.5L1655.0 730.3L1657.0 731.0L1659.0 731.5L1661.0 732.2L1663.0 732.7L1665.0 733.0L1667.0 733.1L1669.0 733.5L1671.0 733.5L1673.0 734.3L1675.0 734.2L1677.0 734.7L1679.0 735.6L1681.0 735.7L1683.0 736.3L1685.0 736.4L1687.0 736.6L1689.0 737.2L1691.0 737.6L1693.0 737.7L1695.0 738.6L1697.0 739.1L1699.0 738.8L1701.0 739.2L1703.0 740.1L1705.0 740.4L1707.0 740.3L1709.0 741.0L1711.0 741.1L1713.0 742.0L1715.0 742.1L1717.0 742.4L1719.0 742.5L1721.0 743.1L1723.0 743.5L1725.0 743.8L1727.0 744.0L1729.0 744.4L1731.0 745.2L1733.0 745.8L1735.0 746.1L1737.0 746.2" fill="none" stroke="#0a0ae0" stroke-width="4.5" stroke-linejoin="round"/></g><rect x="91.0" y="181.3" width="1646.2" height="732.0" fill="none" stroke="#111" stroke-width="1.8"/><rect x="886.4" y="342.8" width="10.5" height="10.5" fill="#19e619" stroke="#0a0a0a" stroke-width="1.2"/><rect x="898.0" y="340.5" width="158.0" height="18" fill="#fff"/><text x="899.5" y="356.3" font-family="Liberation Sans" font-size="15" fill="#1a1a1a">11 659 134Hz, -5.3dB</text><rect x="957.2" y="342.8" width="10.5" height="10.5" fill="#19e619" stroke="#0a0a0a" stroke-width="1.2"/><rect x="968.5" y="340.5" width="158.0" height="18" fill="#fff"/><text x="970.0" y="356.3" font-family="Liberation Sans" font-size="15" fill="#1a1a1a">11 787 121Hz, -5.3dB</text><rect x="643.0" y="618.8" width="10.5" height="10.5" fill="#19e619" stroke="#0a0a0a" stroke-width="1.2"/><rect x="655.0" y="616.5" width="158.0" height="18" fill="#fff"/><text x="656.5" y="632.3" font-family="Liberation Sans" font-size="15" fill="#1a1a1a">11 216 723Hz, -22.3dB</text><rect x="1246.2" y="618.8" width="10.5" height="10.5" fill="#19e619" stroke="#0a0a0a" stroke-width="1.2"/><rect x="1258.0" y="616.5" width="158.0" height="18" fill="#fff"/><text x="1259.5" y="632.3" font-family="Liberation Sans" font-size="15" fill="#1a1a1a">12 312 693Hz, -22.3dB</text></svg>
<div class="t" style="right:1720.0px;top:191.0px;font-size:15px;letter-spacing:-0.2px;color:#1a1a1a">4</div>
<div class="t" style="right:1720.0px;top:223.5px;font-size:15px;letter-spacing:-0.2px;color:#1a1a1a">2</div>
<div class="t" style="right:1720.0px;top:256.0px;font-size:15px;letter-spacing:-0.2px;color:#1a1a1a">0</div>
<div class="t" style="right:1720.0px;top:288.5px;font-size:15px;letter-spacing:-0.2px;color:#1a1a1a">-2</div>
<div class="t" style="right:1720.0px;top:321.0px;font-size:15px;letter-spacing:-0.2px;color:#1a1a1a">-4</div>
<div class="t" style="right:1720.0px;top:353.5px;font-size:15px;letter-spacing:-0.2px;color:#1a1a1a">-6</div>
<div class="t" style="right:1720.0px;top:386.0px;font-size:15px;letter-spacing:-0.2px;color:#1a1a1a">-8</div>
<div class="t" style="right:1720.0px;top:418.5px;font-size:15px;letter-spacing:-0.2px;color:#1a1a1a">-10</div>
<div class="t" style="right:1720.0px;top:451.0px;font-size:15px;letter-spacing:-0.2px;color:#1a1a1a">-12</div>
<div class="t" style="right:1720.0px;top:483.5px;font-size:15px;letter-spacing:-0.2px;color:#1a1a1a">-14</div>
<div class="t" style="right:1720.0px;top:516.0px;font-size:15px;letter-spacing:-0.2px;color:#1a1a1a">-16</div>
<div class="t" style="right:1720.0px;top:548.5px;font-size:15px;letter-spacing:-0.2px;color:#1a1a1a">-18</div>
<div class="t" style="right:1720.0px;top:581.0px;font-size:15px;letter-spacing:-0.2px;color:#1a1a1a">-20</div>
<div class="t" style="right:1720.0px;top:613.5px;font-size:15px;letter-spacing:-0.2px;color:#1a1a1a">-22</div>
<div class="t" style="right:1720.0px;top:646.0px;font-size:15px;letter-spacing:-0.2px;color:#1a1a1a">-24</div>
<div class="t" style="right:1720.0px;top:678.5px;font-size:15px;letter-spacing:-0.2px;color:#1a1a1a">-26</div>
<div class="t" style="right:1720.0px;top:711.0px;font-size:15px;letter-spacing:-0.2px;color:#1a1a1a">-28</div>
<div class="t" style="right:1720.0px;top:743.5px;font-size:15px;letter-spacing:-0.2px;color:#1a1a1a">-30</div>
<div class="t" style="right:1720.0px;top:776.0px;font-size:15px;letter-spacing:-0.2px;color:#1a1a1a">-32</div>
<div class="t" style="right:1720.0px;top:808.5px;font-size:15px;letter-spacing:-0.2px;color:#1a1a1a">-34</div>
<div class="t" style="right:1720.0px;top:841.0px;font-size:15px;letter-spacing:-0.2px;color:#1a1a1a">-36</div>
<div class="t" style="right:1720.0px;top:873.5px;font-size:15px;letter-spacing:-0.2px;color:#1a1a1a">-38</div>
<div class="t" style="right:1720.0px;top:906.0px;font-size:15px;letter-spacing:-0.2px;color:#1a1a1a">-40</div>
<div class="t" style="left:140.0px;top:925.8px;width:120px;text-align:center;font-size:15px;letter-spacing:-0.2px;color:#1a1a1a">10400000</div>
<div class="t" style="left:250.0px;top:925.8px;width:120px;text-align:center;font-size:15px;letter-spacing:-0.2px;color:#1a1a1a">10600000</div>
<div class="t" style="left:360.1px;top:925.8px;width:120px;text-align:center;font-size:15px;letter-spacing:-0.2px;color:#1a1a1a">10800000</div>
<div class="t" style="left:470.1px;top:925.8px;width:120px;text-align:center;font-size:15px;letter-spacing:-0.2px;color:#1a1a1a">11000000</div>
<div class="t" style="left:580.2px;top:925.8px;width:120px;text-align:center;font-size:15px;letter-spacing:-0.2px;color:#1a1a1a">11200000</div>
<div class="t" style="left:690.2px;top:925.8px;width:120px;text-align:center;font-size:15px;letter-spacing:-0.2px;color:#1a1a1a">11400000</div>
<div class="t" style="left:800.2px;top:925.8px;width:120px;text-align:center;font-size:15px;letter-spacing:-0.2px;color:#1a1a1a">11600000</div>
<div class="t" style="left:910.3px;top:925.8px;width:120px;text-align:center;font-size:15px;letter-spacing:-0.2px;color:#1a1a1a">11800000</div>
<div class="t" style="left:1020.3px;top:925.8px;width:120px;text-align:center;font-size:15px;letter-spacing:-0.2px;color:#1a1a1a">12000000</div>
<div class="t" style="left:1130.3px;top:925.8px;width:120px;text-align:center;font-size:15px;letter-spacing:-0.2px;color:#1a1a1a">12200000</div>
<div class="t" style="left:1240.4px;top:925.8px;width:120px;text-align:center;font-size:15px;letter-spacing:-0.2px;color:#1a1a1a">12400000</div>
<div class="t" style="left:1350.4px;top:925.8px;width:120px;text-align:center;font-size:15px;letter-spacing:-0.2px;color:#1a1a1a">12600000</div>
<div class="t" style="left:1460.5px;top:925.8px;width:120px;text-align:center;font-size:15px;letter-spacing:-0.2px;color:#1a1a1a">12800000</div>
<div class="t" style="left:1570.5px;top:925.8px;width:120px;text-align:center;font-size:15px;letter-spacing:-0.2px;color:#1a1a1a">13000000</div>
<div class="a" style="left:1465px;top:177px;width:248px;height:343px;background:#f0f0f0"></div>
<div class="a" style="left:1466px;top:184px;width:246px;height:334px;border:1px solid #a6a6a6;box-shadow:1px 1px 0 #fff, inset 1px 1px 0 #fff"></div>
<div class="t" style="left:1476px;top:179.5px;padding:0 4px;background:#f0f0f0;font-size:14.8px;color:#1a1a1a">Statistic</div>
<div class="btn" style="left:1677px;top:179px;width:25px;height:24px"></div>
<div class="t" style="left:1684.5px;top:184.5px;font-size:15px;color:#222">x</div>
<div class="t" style="left:1487.5px;top:203.5px;font-size:14.7px;color:#1a1a1a">3dB BW: 127 986 Hz</div>
<div class="t" style="left:1487.5px;top:221.7px;font-size:14.7px;color:#1a1a1a">6dB BW: 217 323 Hz</div>
<div class="t" style="left:1487.5px;top:240.0px;font-size:14.7px;color:#1a1a1a">Ripple: 0.0 dB</div>
<div class="t" style="left:1487.5px;top:258.3px;font-size:14.7px;color:#1a1a1a">3dB BW start: 11 659 134 Hz</div>
<div class="t" style="left:1487.5px;top:276.6px;font-size:14.7px;color:#1a1a1a">3dB BW end: 11 787 121 Hz</div>
<div class="t" style="left:1487.5px;top:294.9px;font-size:14.7px;color:#1a1a1a">3dB BW center: 11 723 128 Hz</div>
<div class="t" style="left:1487.5px;top:313.2px;font-size:14.7px;color:#1a1a1a">6dB BW start: 11 615 557 Hz</div>
<div class="t" style="left:1487.5px;top:331.5px;font-size:14.7px;color:#1a1a1a">6dB BW end: 11 832 880 Hz</div>
<div class="t" style="left:1487.5px;top:349.8px;font-size:14.7px;color:#1a1a1a">6dB BW center: 11 724 219 Hz</div>
<div class="t" style="left:1487.5px;top:368.1px;font-size:14.7px;color:#1a1a1a">20dB BW: 1 095 970 Hz</div>
<div class="t" style="left:1487.5px;top:386.4px;font-size:14.7px;color:#1a1a1a">20dB shape factor: 1:8.6</div>
<div class="btn" style="left:1747px;top:181px;width:34px;height:34px"></div>
<div class="btn" style="left:1747px;top:225px;width:34px;height:34px"></div>
<div class="btn" style="left:1747px;top:269px;width:34px;height:34px"></div>
<div class="btn" style="left:1747px;top:337px;width:34px;height:34px"></div>
<div class="btn" style="left:1747px;top:401px;width:34px;height:34px"></div>
<div class="btn" style="left:1747px;top:479px;width:34px;height:35px"></div>
<div class="btn" style="left:1747px;top:523px;width:34px;height:35px"></div>
<div class="a" style="left:0;top:957px;width:1800px;height:56px;background:#111"></div>
<svg class="ic" style="left:20px;top:971px" width="28" height="28" viewBox="0 0 28 28"><path d="M2 5.5 L12 4 V13 H2 Z M14 3.7 L26 2 V13 H14 Z M2 15 H12 V24 L2 22.6 Z M14 15 H26 V26 L14 24.3 Z" fill="#fff"/></svg>
<svg class="ic" style="left:86px;top:970px" width="30" height="30" viewBox="0 0 30 30"><circle cx="18.5" cy="11.5" r="8" fill="none" stroke="#e6e6e6" stroke-width="1.5"/><path d="M12.8 17.3 L4.5 25.8" stroke="#e6e6e6" stroke-width="1.6"/></svg>
<svg class="ic" style="left:154px;top:970px" width="30" height="30" viewBox="0 0 30 30"><circle cx="14.5" cy="14.5" r="9.6" fill="none" stroke="#fff" stroke-width="3"/></svg>
<svg class="ic" style="left:222px;top:971px" width="30" height="28" viewBox="0 0 30 28"><path d="M2.5 2.5 H15.5 M2.5 24.5 H15.5 M2.5 1 V4 M15.5 1 V4 M2.5 23 V26 M15.5 23 V26" stroke="#e8e8e8" stroke-width="1.4" fill="none"/><rect x="2.5" y="7" width="13" height="13" fill="none" stroke="#e8e8e8" stroke-width="1.5"/><path d="M24.5 1 V26" stroke="#e8e8e8" stroke-width="1.4"/><rect x="23" y="7.5" width="3" height="3" fill="#fff"/></svg>
<div class="a" style="left:280px;top:1010px;width:58px;height:3px;background:#78b0e0"></div>
<div class="a" style="left:351px;top:1010px;width:57px;height:3px;background:#78b0e0"></div>
<div class="a" style="left:491px;top:1010px;width:57px;height:3px;background:#78b0e0"></div>
<div class="a" style="left:556px;top:1010px;width:68px;height:3px;background:#78b0e0"></div>
<div class="a" style="left:556px;top:957px;width:68px;height:53px;background:#333"></div>
<svg class="ic" style="left:292px;top:971px" width="33" height="28" viewBox="0 0 33 28"><path d="M1 3 H12 L14.5 5.5 H31 V25 H1 Z" fill="#e8b43a"/><rect x="1" y="7.5" width="30.5" height="17.5" fill="#f8d36a"/><path d="M8 26 V17 H24 V26 H19.5 V20.5 H12.5 V26 Z" fill="#3b8fd8"/></svg>
<svg class="ic" style="left:361px;top:967px" width="36" height="36" viewBox="0 0 36 36"><defs><linearGradient id="eb" x1="0" y1="0" x2="0.3" y2="1"><stop offset="0" stop-color="#2aa8ee"/><stop offset="1" stop-color="#1a5ec8"/></linearGradient><linearGradient id="eg2" x1="0" y1="0" x2="1" y2="0.6"><stop offset="0" stop-color="#31c3ef"/><stop offset="0.55" stop-color="#2fc7c0"/><stop offset="1" stop-color="#5ee05a"/></linearGradient></defs><circle cx="18" cy="17.8" r="16.8" fill="url(#eb)"/><path d="M2 15 C5 5 14 1 20 1.5 C30 2.5 35 10 34.8 17 C34.6 24 29 27 24.5 26.5 C20 26 18 23 19 19.5 C20 16 16 13 11 14 C7 14.5 4 16 2 18 Z" fill="url(#eg2)"/><path d="M12.5 18.5 C12.5 15 15.5 13 18.5 14 C21.5 15 21 19 22 21.5 C23.5 25 29 26.5 33.5 23.5 C31 28.5 25.5 30.5 21 29.5 C16 28.5 12.5 23 12.5 18.5 Z" fill="#0d1a2a"/><path d="M6 30 C9 33 13 34.5 18 34.6" stroke="#1d4fb0" stroke-width="1.5" fill="none"/></svg>
<svg class="ic" style="left:431px;top:968px" width="36" height="36" viewBox="0 0 36 36"><ellipse cx="16" cy="20" rx="14" ry="11" fill="#bcd7ee" transform="rotate(-25 16 20)"/><circle cx="9" cy="20" r="2.4" fill="#e23b3b"/><circle cx="12" cy="13.5" r="2.4" fill="#59b548"/><circle cx="18.5" cy="11" r="2.4" fill="#f0c330"/><circle cx="14" cy="24" r="2" fill="#111"/><path d="M31 2 L17 31" stroke="#d69145" stroke-width="3"/><path d="M29 1 L33 3 L30 8 L27 6 Z" fill="#f3d09a"/></svg>
<svg class="ic" style="left:507px;top:970px" width="26" height="30" viewBox="0 0 26 30"><g fill="#c9c21a" stroke="#111" stroke-width="1"><ellipse cx="13" cy="25.0" rx="10.5" ry="3.6"/><ellipse cx="13" cy="20.8" rx="10.5" ry="3.6"/><ellipse cx="13" cy="16.6" rx="10.5" ry="3.6"/><ellipse cx="13" cy="12.4" rx="10.5" ry="3.6"/><ellipse cx="13" cy="8.2" rx="10.5" ry="3.6"/><ellipse cx="13" cy="4.0" rx="10.5" ry="3.6"/></g></svg>
<svg class="ic" style="left:572px;top:972px" width="36" height="31" viewBox="0 0 36 31"><rect x="2" y="2" width="31" height="26" rx="3" fill="#d81b22" stroke="#fbe3e3" stroke-width="2.6"/><polyline points="6,16 11,16 14,10 18,22 21,12 24,16 30,16" fill="none" stroke="#fff" stroke-width="2"/></svg>
<svg class="ic" style="left:1444px;top:977px" width="22" height="14" viewBox="0 0 22 14"><path d="M2.5 11.5 L11 3.3 L19.5 11.5" fill="none" stroke="#e8e8e8" stroke-width="1.5"/></svg>
<svg class="ic" style="left:1480px;top:973px" width="20" height="24" viewBox="0 0 20 24"><path d="M4 3.5 Q10 0.5 16 3.5 M4 20.5 Q10 23.5 16 20.5" fill="none" stroke="#ddd" stroke-width="1.3"/><rect x="2.5" y="7" width="10" height="10" rx="2" fill="none" stroke="#e8e8e8" stroke-width="1.5"/><path d="M12.5 10.5 L16.5 8 V16 L12.5 13.5" fill="none" stroke="#e8e8e8" stroke-width="1.5"/></svg>
<svg class="ic" style="left:1513px;top:975px" width="22" height="22" viewBox="0 0 22 22"><path d="M2 19 A17 17 0 0 1 19 2" fill="none" stroke="#aaa" stroke-width="1.3"/><path d="M6 19 A13 13 0 0 1 19 6" fill="none" stroke="#e6e6e6" stroke-width="1.5"/><path d="M10 19 A9 9 0 0 1 19 10" fill="none" stroke="#e6e6e6" stroke-width="1.5"/><circle cx="17.5" cy="17.5" r="1.8" fill="#fff"/></svg>
<svg class="ic" style="left:1544px;top:975px" width="26" height="20" viewBox="0 0 26 20"><path d="M6 17 C1 17 1 10 6 10 C7 4 15 3 17 8 C22 7 25 11 23 17 Z" fill="#8a8a8a"/><path d="M3 17.5 C1 14 4 11.5 7 12 C9 9 15 9 17 12 C21 11.5 24 14 23.5 17.5 Z" fill="#f0f0f0"/></svg>
<div class="t" style="left:1582.5px;top:977.5px;font-size:16.3px;color:#f2f2f2">ENG</div>
<div class="t" style="left:1634px;top:964px;width:80px;text-align:center;font-size:15.6px;color:#f2f2f2">12:51</div>
<div class="t" style="left:1633.5px;top:990px;font-size:15.6px;color:#f2f2f2;letter-spacing:0.3px">31.12.2021</div>
<svg class="ic" style="left:1740px;top:972px" width="40" height="40" viewBox="0 0 40 40"><path d="M2 2 H24.5 V19.5 H12 L6 25 V19.5 H2 Z" fill="#fff"/><path d="M6 7.5 H20 M6 11.5 H20 M6 15.5 H15" stroke="#111" stroke-width="1.3"/><circle cx="24.5" cy="23.5" r="11" fill="#2b2b2b" stroke="#6a6a6a" stroke-width="1.3"/><text x="24.5" y="29.5" text-anchor="middle" font-family="Liberation Sans" font-weight="bold" font-size="16" fill="#fff">5</text></svg>
<div class="a" style="left:1793px;top:957px;width:1px;height:56px;background:#6e6e6e"></div>
<svg class="ic" style="left:165px;top:58px" width="20" height="11" viewBox="0 0 20 11"><circle cx="5.6" cy="5.1" r="3.4" fill="#1d5ec4"/><circle cx="13.8" cy="5.1" r="3.4" fill="#d0206e"/></svg>
<svg class="ic" style="left:17px;top:99px" width="26" height="15" viewBox="0 0 26 15"><path d="M1 7 H6 M20 7 H25" stroke="#3a3a3a" stroke-width="2.2"/><path d="M5.5 7 L9 2 H17 L20.5 7 L17 12.5 H9 Z" fill="#b8b8b8" stroke="#333" stroke-width="1.6"/><path d="M13 2 V12.5" stroke="#333" stroke-width="1.6"/></svg>
<svg class="ic" style="left:162px;top:95px" width="26" height="24" viewBox="0 0 26 24"><rect x="1.5" y="1.5" width="19.5" height="19" fill="#dbe8f7" stroke="#8ea2b8" stroke-width="1.6"/><rect x="4" y="4" width="14.5" height="2.2" fill="#b8d8c8"/><path d="M4 9 H17 M4 12.5 H17 M4 16 H17 M8.5 8 V19 M13 8 V19" stroke="#b0c4dc" stroke-width="1"/><circle cx="18.5" cy="17.5" r="4.6" fill="#9a9a9a" stroke="#6e6e6e" stroke-width="1.6" stroke-dasharray="2 1.2"/><circle cx="18.5" cy="17.5" r="1.8" fill="#eee"/></svg>
<svg class="ic" style="left:412px;top:53px" width="26" height="22" viewBox="0 0 26 22"><rect x="1.5" y="7" width="7" height="13.8" fill="#f08080" stroke="#b04a5a" stroke-width="1"/><rect x="9" y="1.5" width="7.6" height="19.3" fill="#6a9cf0" stroke="#2d50a8" stroke-width="1"/><rect x="17" y="11.5" width="7" height="9.3" fill="#8fcf8f" stroke="#3f6f3f" stroke-width="1"/><path d="M1.5 21 H24" stroke="#333" stroke-width="1.2"/></svg>
<svg class="ic" style="left:513px;top:52px" width="20" height="23" viewBox="0 0 20 23"><rect x="1.5" y="1" width="4" height="21" fill="#222"/><rect x="14.5" y="1" width="4" height="21" fill="#111"/><rect x="5.5" y="2.5" width="9" height="8.5" fill="#7fcf8a"/><rect x="5.5" y="3" width="9" height="3.5" fill="#8ab6e0"/><rect x="5.5" y="12" width="9" height="9" fill="#7fcf8a"/><rect x="5.5" y="12.5" width="9" height="3.5" fill="#86c3e0"/><rect x="5.5" y="11" width="9" height="1.2" fill="#5a6a3a"/></svg>
<svg class="ic" style="left:422px;top:96px" width="13" height="20" viewBox="0 0 13 20"><defs><linearGradient id="rg" x1="0" y1="0" x2="1" y2="1"><stop offset="0" stop-color="#9cc0ff"/><stop offset="1" stop-color="#3056c0"/></linearGradient></defs><path d="M1.5 1.5 L11 9.3 L1.5 17.5 Z" fill="url(#rg)" stroke="#3a5aa8" stroke-width="1"/></svg>
<svg class="ic" style="left:515px;top:95px" width="25" height="24" viewBox="0 0 25 24"><path d="M1.5 1.5 L8 7 L8 21 H1.5 Z" fill="#2a5ed0"/><path d="M3 16 C5 7 11 3 15 3 C19 3 21 7 21 11" fill="none" stroke="#e03a3a" stroke-width="3"/><path d="M3 19 C6 12 10 9 14 10 C17 11 19 14 20 16" fill="none" stroke="#3060d8" stroke-width="2.6"/><path d="M5 13 L11 8" stroke="#fff" stroke-width="1.4"/><path d="M1.5 21 H15" stroke="#1e6e3e" stroke-width="2.4"/><circle cx="17" cy="17" r="5" fill="#8fe07a" stroke="#3f9a3a" stroke-width="1.6"/></svg>
<svg class="ic" style="left:614px;top:94px" width="24" height="24" viewBox="0 0 24 24"><path d="M7.5 1.5 C3.5 1.5 2 4 2 7 C2 11 6 14 7 22 C8.5 14 13 11 13 7 C13 4 11.5 1.5 7.5 1.5 Z" fill="#f06a6a" stroke="#8a1414" stroke-width="1.6"/><circle cx="7.5" cy="6.5" r="1.4" fill="#5a1010"/><path d="M12 18 H17 V15 L22 19 L17 23 V20 H12 Z" fill="#3a9ae0" stroke="#1a4a90" stroke-width="1"/></svg>
<svg class="ic" style="left:732px;top:94px" width="24" height="23" viewBox="0 0 24 23"><path d="M3 2 L10 10" stroke="#7a4a1a" stroke-width="3"/><path d="M8 8 C6 12 7 18 13 21 L21 16 C18 12 14 9 10 7 Z" fill="#e8d430" stroke="#8a6a10" stroke-width="1.3"/><path d="M3 2 L6 5" stroke="#a0622a" stroke-width="3.4"/></svg>
<svg class="ic" style="left:832px;top:94px" width="24" height="24" viewBox="0 0 24 24"><path d="M8 1.5 C4 1.5 2 4 2 7.5 C2 11 5.5 14 7 22 C8.5 14 14 11 14 7.5 C14 4 12 1.5 8 1.5 Z" fill="#1a88c8" stroke="#0d4a80" stroke-width="1.4"/><circle cx="8" cy="7" r="2.6" fill="#bff0ff"/><path d="M11 12 L19 20 M19 12 L11 20" stroke="#d81818" stroke-width="2.6"/></svg>
<svg class="ic" style="left:754px;top:54px" width="22" height="16" viewBox="0 0 22 16"><circle cx="2.0" cy="8.0" r="1.1" fill="#b0b0b0"/><circle cx="5.0" cy="3.0" r="1.1" fill="#b0b0b0"/><circle cx="10.0" cy="1.5" r="1.1" fill="#b0b0b0"/><circle cx="15.0" cy="3.0" r="1.1" fill="#b0b0b0"/><circle cx="18.0" cy="7.5" r="1.1" fill="#b0b0b0"/><circle cx="8.5" cy="12.0" r="1.1" fill="#b0b0b0"/><circle cx="10.0" cy="13.0" r="1.1" fill="#b0b0b0"/></svg>
<svg class="ic" style="left:861px;top:53px" width="25" height="18" viewBox="0 0 25 18"><circle cx="2.5" cy="11.0" r="1.9" fill="#111"/><circle cx="5.5" cy="5.5" r="1.9" fill="#111"/><circle cx="11.0" cy="2.5" r="1.9" fill="#111"/><circle cx="17.0" cy="3.5" r="1.9" fill="#111"/><circle cx="21.5" cy="8.0" r="1.9" fill="#111"/><circle cx="22.5" cy="12.5" r="1.9" fill="#111"/><path d="M7 9 L13 15" stroke="#111" stroke-width="2.6" stroke-linecap="round"/></svg>
<svg class="ic" style="left:969px;top:50px" width="26" height="24" viewBox="0 0 26 24"><rect x="1.5" y="1.5" width="22.5" height="21.5" rx="2" fill="#f49a3a" stroke="#e07a20" stroke-width="1"/><circle cx="6.5" cy="18" r="2.4" fill="#fff6e0"/><path d="M5 11 A7.5 7.5 0 0 1 12.5 18.5 M5 5.5 A13 13 0 0 1 18 18.5" fill="none" stroke="#fff6e0" stroke-width="2.6"/></svg>
<svg class="ic" style="left:961px;top:94px" width="28" height="24" viewBox="0 0 28 24"><path d="M7 3 H20 V20 H9 L5 12 Z" fill="#f6f4f0" stroke="#ccc" stroke-width="0.8"/><path d="M3 8 L7.5 14" stroke="#444" stroke-width="2.6" stroke-linecap="round"/><path d="M8 2.5 H14" stroke="#666" stroke-width="2"/><path d="M11 17 L16 20.5 M13 22 H18" stroke="#555" stroke-width="2"/><path d="M15 3 H23 V10" stroke="#1a5f9e" stroke-width="2.6" fill="none"/><path d="M22 4 L15 11" stroke="#3a8ad0" stroke-width="3"/></svg>
<svg class="ic" style="left:1075px;top:50px" width="24" height="24" viewBox="0 0 24 24"><path d="M18.52 8.60 L18.88 9.70 L21.34 9.74 L21.34 13.26 L18.88 13.30 L18.52 14.42 L18.00 15.45 L19.70 17.22 L17.22 19.70 L15.45 18.00 L14.40 18.52 L13.30 18.88 L13.26 21.34 L9.74 21.34 L9.70 18.88 L8.58 18.52 L7.55 18.00 L5.78 19.70 L3.30 17.22 L5.00 15.45 L4.48 14.40 L4.12 13.30 L1.66 13.26 L1.66 9.74 L4.12 9.70 L4.48 8.58 L5.00 7.55 L3.30 5.78 L5.78 3.30 L7.55 5.00 L8.60 4.48 L9.70 4.12 L9.74 1.66 L13.26 1.66 L13.30 4.12 L14.42 4.48 L15.45 5.00 L17.22 3.30 L19.70 5.78 L18.00 7.55 Z" fill="#bdbdbd" stroke="#2e2e2e" stroke-width="1.3" transform="rotate(22.5 11.5 11.5)"/><circle cx="11.5" cy="11.5" r="5.5" fill="#aaa"/><circle cx="11.5" cy="11.5" r="2.6" fill="#f4f4f4" stroke="#222" stroke-width="1.5"/></svg>
<svg class="ic" style="left:1208px;top:50px" width="26" height="25" viewBox="0 0 26 25"><circle cx="12.5" cy="12.5" r="11" fill="#2c4fb8" stroke="#111a40" stroke-width="1.8"/><circle cx="12.5" cy="12.5" r="8.5" fill="#3a64d0"/><text x="12.5" y="18.5" text-anchor="middle" font-family="Liberation Sans" font-weight="bold" font-size="15" fill="#fff">?</text></svg>
<svg class="ic" style="left:1119px;top:96px" width="22" height="23" viewBox="0 0 22 23"><path d="M1.5 1.5 L13 10.5 L1.5 19.5 Z" fill="#5a8ee8" stroke="#2a50b0" stroke-width="1"/><circle cx="14.5" cy="16.5" r="4.6" fill="#8ee07a" stroke="#3a9a3a" stroke-width="1.6"/></svg>
<svg class="ic" style="left:1208px;top:96px" width="25" height="23" viewBox="0 0 25 23"><path d="M3 21 A17 17 0 0 1 21 3" fill="none" stroke="#e84040" stroke-width="3"/><path d="M6 21 A14 14 0 0 1 21 6" fill="none" stroke="#f0a030" stroke-width="3"/><path d="M9 21 A11 11 0 0 1 21 9" fill="none" stroke="#e8e040" stroke-width="3"/><path d="M12 21 A8 8 0 0 1 21 12" fill="none" stroke="#50c050" stroke-width="3"/><path d="M15 21 A5 5 0 0 1 21 15" fill="none" stroke="#4a80e0" stroke-width="3"/></svg>
<svg class="ic" style="left:1751px;top:185px" width="26" height="26" viewBox="0 0 26 26"><circle cx="10" cy="10" r="7.5" fill="#cfe2fa" stroke="#7aa0d0" stroke-width="1.6"/><path d="M15 15 L22 22" stroke="#c07a3a" stroke-width="4" stroke-linecap="round"/></svg>
<svg class="ic" style="left:1751px;top:229px" width="26" height="26" viewBox="0 0 26 26"><path d="M2 2 H9 L7 4 L10 7 L7 10 L4 7 L2 9 Z" fill="#5ab25a"/><path d="M24 2 H17 L19 4 L16 7 L19 10 L22 7 L24 9 Z" fill="#5ab25a"/><path d="M2 24 H9 L7 22 L10 19 L7 16 L4 19 L2 17 Z" fill="#5ab25a"/><path d="M24 24 H17 L19 22 L16 19 L19 16 L22 19 L24 17 Z" fill="#5ab25a"/></svg>
<svg class="ic" style="left:1751px;top:273px" width="26" height="26" viewBox="0 0 26 26"><path d="M13 1.5 L19 8 H15.5 V18 H19 L13 24.5 L7 18 H10.5 V8 H7 Z" fill="#5ab85a" stroke="#2a6a2a" stroke-width="1"/></svg>
<svg class="ic" style="left:1751px;top:341px" width="26" height="26" viewBox="0 0 26 26"><path d="M2 3 L9 9 V22 H2 Z" fill="#2a5ed0"/><path d="M3 18 C5 9 11 5 15 5 C19 5 22 9 22 13" fill="none" stroke="#e03a3a" stroke-width="3"/><path d="M3 21 C6 14 10 11 14 12 C17 13 20 16 22 19" fill="none" stroke="#3060d8" stroke-width="2.6"/><path d="M2 22.5 H24" stroke="#1e6e3e" stroke-width="2.4"/></svg>
<svg class="ic" style="left:1751px;top:405px" width="26" height="26" viewBox="0 0 26 26"><rect x="2" y="7" width="22" height="14" rx="2" fill="#555"/><rect x="16" y="5" width="6" height="3" fill="#444"/><circle cx="11" cy="14" r="5" fill="#5a9ae0"/></svg>
<svg class="ic" style="left:1751px;top:484px" width="26" height="26" viewBox="0 0 26 26"><rect x="3" y="3" width="13" height="13" fill="#7aa0e0" stroke="#4a70b0" stroke-width="1"/><rect x="6" y="6" width="13" height="13" fill="#8ab0ea" stroke="#4a70b0" stroke-width="1"/><rect x="9" y="9" width="13" height="13" fill="#9abcf0" stroke="#4a70b0" stroke-width="1"/><rect x="12" y="10" width="7" height="4" fill="#eef"/><rect x="12" y="17" width="8" height="4" fill="#8fd08f"/></svg>
<svg class="ic" style="left:1751px;top:528px" width="26" height="26" viewBox="0 0 26 26"><path d="M9 2 H18 L22 6 V19 H9 Z" fill="#fff" stroke="#222" stroke-width="1.4"/><path d="M12 9 H19 M12 12 H19 M12 15 H19" stroke="#222" stroke-width="1.2"/><path d="M2 13 H10 L12 16 H21 L18 22 H3 Z" fill="#e6e26a" stroke="#222" stroke-width="1.4"/></svg></body></html>
